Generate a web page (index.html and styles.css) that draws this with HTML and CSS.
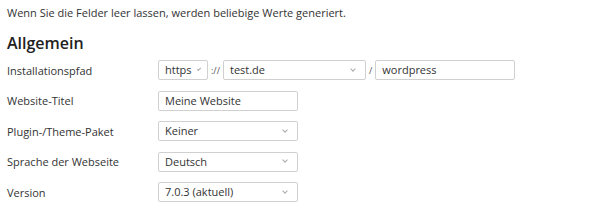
FILE: index.html
```html
<!DOCTYPE html>
<html lang="de">
<head>
    <meta charset="UTF-8">
    <title>Installation</title>
    <link rel="stylesheet" href="styles.css">
</head>
<body>
    <p class="hint">Wenn Sie die Felder leer lassen, werden beliebige Werte generiert.</p>
    <h2>Allgemein</h2>

    <div class="form">
        <div class="row">
            <label>Installationspfad</label>
            <div class="field path">
                <div class="select proto">https <span class="caret"></span></div>
                <span class="sep">://</span>
                <div class="select domain">test.de <span class="caret"></span></div>
                <span class="sep">/</span>
                <div class="input dir">wordpress</div>
            </div>
        </div>
        <div class="row">
            <label>Website-Titel</label>
            <div class="field"><div class="input wide">Meine Website</div></div>
        </div>
        <div class="row">
            <label>Plugin-/Theme-Paket</label>
            <div class="field"><div class="select wide">Keiner <span class="caret"></span></div></div>
        </div>
        <div class="row">
            <label>Sprache der Webseite</label>
            <div class="field"><div class="select wide">Deutsch <span class="caret"></span></div></div>
        </div>
        <div class="row">
            <label>Version</label>
            <div class="field"><div class="select wide">7.0.3 (aktuell) <span class="caret"></span></div></div>
        </div>
    </div>
</body>
</html>
```

FILE: styles.css
```css
body {
    margin: 0;
    padding: 0 7px;
    font-family: "Open Sans", Arial, sans-serif;
    font-size: 11px;
    color: #333;
    background: #fff;
}

.hint {
    margin: 0;
    padding-top: 5px;
    line-height: 15px;
}

h2 {
    margin: 13px 0 0;
    font-size: 16px;
    font-weight: 600;
    line-height: 20px;
    color: #222;
}

.form {
    margin-top: 7px;
}

.row {
    display: flex;
    align-items: center;
    height: 20px;
    margin-bottom: 10.6px;
}

.row label {
    width: 151px;
    flex: none;
}

.field {
    display: flex;
    align-items: center;
}

.input, .select {
    box-sizing: border-box;
    height: 20px;
    border: 1px solid #d0d0d0;
    border-radius: 2px;
    padding: 0 6px;
    line-height: 18px;
    background: #fff;
    display: flex;
    align-items: center;
}

.select {
    justify-content: space-between;
}

.caret {
    width: 3px;
    height: 3px;
    border-right: 1px solid #aaa;
    border-bottom: 1px solid #aaa;
    transform: rotate(45deg);
    margin: -3px 4px 0 6px;
}

.proto {
    width: 50px;
}

.proto .caret {
    margin-right: 1px;
}

.domain {
    width: 143px;
}

.dir {
    width: 140px;
}

.wide {
    width: 140px;
}

.sep {
    padding: 0 3px 0 3px;
    font-size: 9px;
    color: #555;
}
```
